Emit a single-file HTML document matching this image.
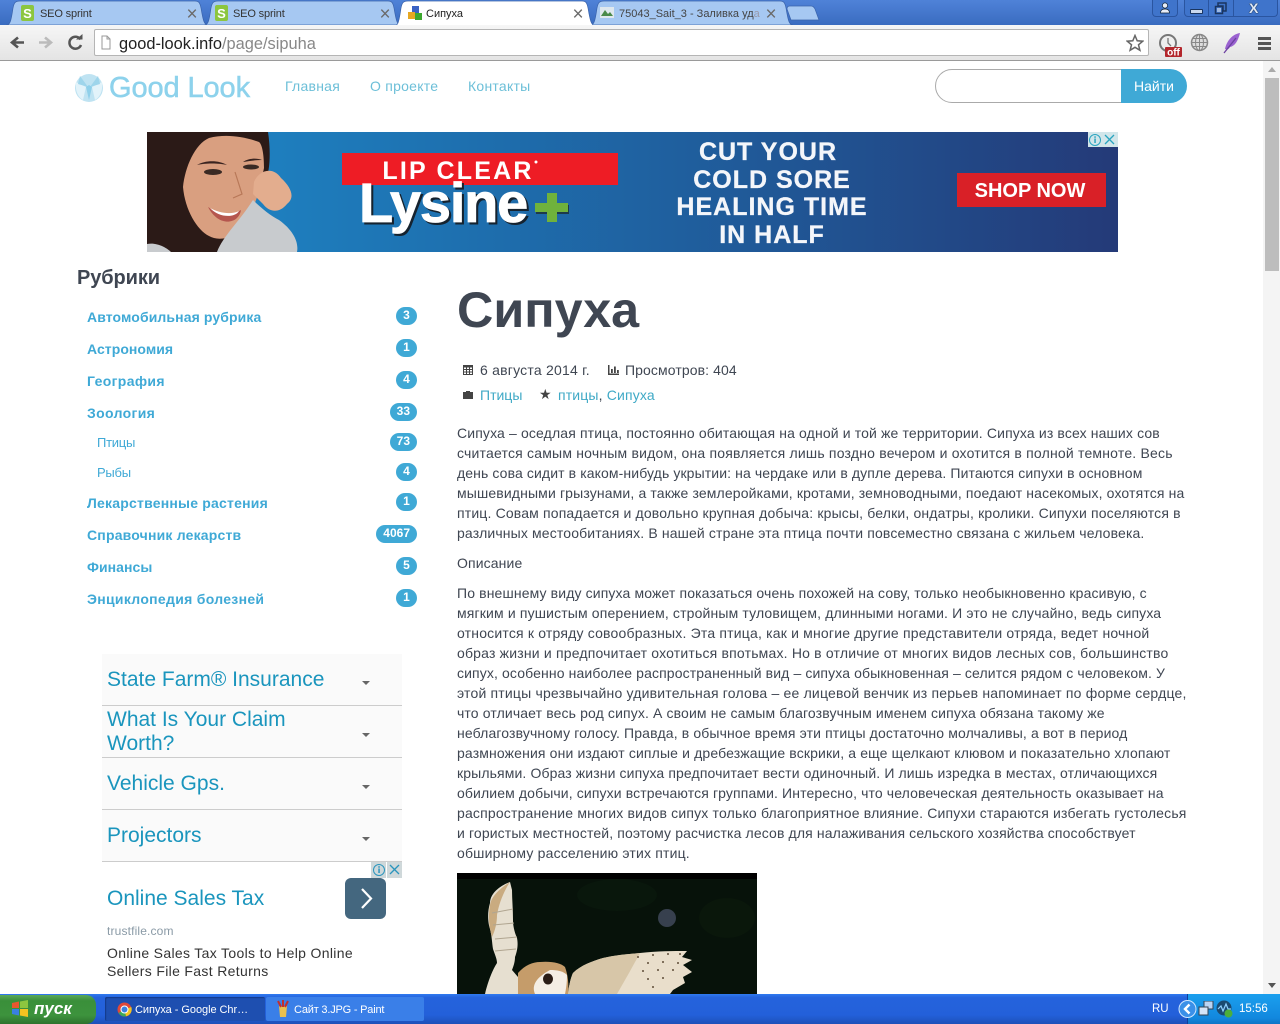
<!DOCTYPE html>
<html lang="ru"><head><meta charset="utf-8"><title>Сипуха</title>
<style>
*{box-sizing:border-box}
html,body{margin:0;padding:0;width:1280px;height:1024px;overflow:hidden;background:#fff}
body{font-family:"Liberation Sans","DejaVu Sans",sans-serif;position:relative;color:#3f4652}
.a{position:absolute;white-space:nowrap}
.tt{position:absolute;top:6px;font-size:11px;line-height:16px;color:#333;white-space:nowrap;letter-spacing:-.15px}
.x{position:absolute;top:8px;width:12px;height:14px;color:#6b6b6b;font-size:19px;line-height:14px;text-align:center}
.cat{position:absolute;left:87px;font-size:14px;font-weight:bold;color:#3fa9d6;white-space:nowrap;line-height:18px}
.sub{position:absolute;left:97px;font-size:13px;color:#3fa9d6;line-height:18px;letter-spacing:-.25px}
.bdg{position:absolute;right:863px;height:18px;min-width:21px;padding:0 7px;border-radius:9px;background:#3fa9d6;color:#fff;font-size:12px;font-weight:bold;line-height:17px;text-align:center}
.p{position:absolute;left:457px;font-size:14px;line-height:20px;color:#3f4652;white-space:nowrap}
.p span{display:block;height:20px}
.adl{position:absolute;left:102px;width:300px;background:#fafafa;border-bottom:1px solid #ccc}
.adl b{position:absolute;left:5px;font-weight:normal;font-size:21px;line-height:24px;color:#1a95bd;white-space:nowrap}
.adl i{position:absolute;left:260px;width:0;height:0;border-left:4px solid transparent;border-right:4px solid transparent;border-top:4px solid #666}
.lnk{color:#3fa9c6}
.nav{position:absolute;top:77px;font-size:14px;line-height:18px;color:#6cbfd8;letter-spacing:.25px;white-space:nowrap}
</style></head><body>

<!-- Chrome frame -->
<div class="a" style="left:0;top:0;width:1280px;height:25px;background:linear-gradient(#4f82d8,#3a6cc0)"></div>
<svg class="a" style="left:0;top:0" width="830" height="26" viewBox="0 0 830 26">
<path d="M6 25C10 25 11 22 13 8 14 3 15 1 20 1H195C199 1 200 3 201 8 203 20 204 25 208 25z" fill="#a6c8f2" stroke="#3a63ab" stroke-width=".7"/>
<path d="M204 25C208 25 209 22 211 8 212 3 213 1 218 1H388C392 1 393 3 394 8 396 20 397 25 401 25z" fill="#a6c8f2" stroke="#3a63ab" stroke-width=".7"/>
<path d="M590 25C594 25 595 22 597 8 598 3 599 1 604 1H780C784 1 785 3 786 8 788 20 789 25 793 25z" fill="#a6c8f2" stroke="#3a63ab" stroke-width=".7"/>
<path d="M394 26C398 26 399 22 401 8 402 3 403 1 408 1H582C586 1 587 3 588 8 590 20 591 26 596 26z" fill="#fff" stroke="#3a63ab" stroke-width=".7"/>
<path d="M787 9C787 7 788 6 790 6H811C813 6 814 7 815 9L819 20H791z" fill="#a6c8f2" stroke="#3a63ab" stroke-width=".7"/>
</svg>
<div class="tt" style="left:40px">SEO sprint</div><div class="x" style="left:186px">×</div>
<div class="tt" style="left:233px">SEO sprint</div><div class="x" style="left:379px">×</div>
<div class="tt" style="left:426px;color:#222;letter-spacing:0">Сипуха</div><div class="x" style="left:572px">×</div>
<div class="tt" style="left:619px;color:#444;letter-spacing:0">75043_Sait_3 - Заливка уд<span style="color:#99a">а</span></div><div class="x" style="left:765px">×</div>

<!-- favicons -->
<svg class="a" style="left:20px;top:4px" width="16" height="18" viewBox="0 0 16 18"><rect x="1" y="1" width="13" height="16" rx="2" fill="#8cc63f"/><text x="7.5" y="14" font-size="13" font-weight="bold" text-anchor="middle" fill="#fff" font-family="Liberation Sans">S</text></svg>
<svg class="a" style="left:214px;top:4px" width="16" height="18" viewBox="0 0 16 18"><rect x="1" y="1" width="13" height="16" rx="2" fill="#8cc63f"/><text x="7.5" y="14" font-size="13" font-weight="bold" text-anchor="middle" fill="#fff" font-family="Liberation Sans">S</text></svg>
<svg class="a" style="left:408px;top:5px" width="15" height="16" viewBox="0 0 15 16"><rect x="4" y="1" width="7" height="7" fill="#3a62c4"/><rect x="0" y="7" width="7" height="7" fill="#e6a823"/><rect x="7" y="8" width="7" height="7" fill="#3da82f"/></svg>
<svg class="a" style="left:600px;top:7px" width="14" height="11" viewBox="0 0 14 11"><rect width="14" height="11" fill="#dfe8ee"/><path d="M1 9 5 3l3 4 2-2 3 4z" fill="#4a8a4a"/></svg>

<!-- window controls -->
<div class="a" style="left:1152px;top:0;width:26px;height:17px;background:#3f74cb;border:1px solid #2a55a0;border-top:0;border-radius:0 0 4px 4px"></div>
<svg class="a" style="left:1159px;top:2px" width="12" height="12" viewBox="0 0 12 12"><circle cx="6" cy="3.5" r="2.6" fill="#e8eef8" stroke="#123" stroke-width=".7"/><path d="M1.5 11c0-3 2-4 4.500-4s4.500 1 4.500 4z" fill="#e8eef8" stroke="#123" stroke-width=".7"/></svg>
<div class="a" style="left:1184px;top:0;width:94px;height:17px;background:#3f74cb;border:1px solid #2a55a0;border-top:0;border-radius:0 0 4px 4px"></div>
<div class="a" style="left:1208px;top:0;width:1px;height:16px;background:#2a55a0"></div>
<div class="a" style="left:1233px;top:0;width:1px;height:16px;background:#2a55a0"></div>
<div class="a" style="left:1190px;top:9px;width:13px;height:5px;background:#c9d8ee;border:1px solid #1a3560;border-radius:1px"></div>
<svg class="a" style="left:1214px;top:2px" width="13" height="13" viewBox="0 0 13 13"><path d="M4 1h8v8H9V4H4z" fill="none" stroke="#1a3560" stroke-width="1.500"/><rect x="1.500" y="4.500" width="7" height="7" fill="none" stroke="#1a3560" stroke-width="1.500"/><rect x="3" y="6" width="4" height="4" fill="#9db9e4"/></svg>
<div class="a" style="left:1249px;top:1px;font-size:14px;line-height:15px;font-weight:bold;color:#dfe8f6;text-shadow:0 0 1px #123,0 0 1px #123">X</div>

<!-- toolbar -->
<div class="a" style="left:0;top:25px;width:1280px;height:36px;background:linear-gradient(#f6f6f6,#e4e4e4);border-bottom:1px solid #9a9a9a"></div>
<svg class="a" style="left:8px;top:34px" width="80" height="18" viewBox="0 0 80 18"><path d="M16 8.500H6M10 3.500 4 8.500l6 5" fill="none" stroke="#555" stroke-width="2.600"/><path d="M31 8.500h10M37 3.500l6 5-6 5" fill="none" stroke="#bbb" stroke-width="2.600"/><path d="M72.500 5.500A6 6 0 1 0 73 11" fill="none" stroke="#555" stroke-width="2.500"/><path d="M68 5.500h6.500V0z" fill="#555"/></svg>
<div class="a" style="left:94px;top:29px;width:1055px;height:27px;background:#fff;border:1px solid #b5b5b5;border-radius:2px"></div>
<svg class="a" style="left:100px;top:35px" width="12" height="15" viewBox="0 0 12 15"><path d="M2 1h5l3 3v10H2z" fill="#fff" stroke="#999"/><path d="M7 1v3h3" fill="none" stroke="#999"/></svg>
<div class="a" style="left:119px;top:34px;font-size:16.400px;line-height:20px;color:#222">good-look.info<span style="color:#888">/page/sipuha</span></div>
<svg class="a" style="left:1126px;top:34px" width="18" height="18" viewBox="0 0 18 18"><path d="M9 1.500 11.200 6.800l5.600.4-4.300 3.600 1.400 5.500L9 13.300 4.100 16.300l1.400-5.500L1.200 7.200l5.600-.4z" fill="#fff" stroke="#666" stroke-width="1.500"/></svg>
<svg class="a" style="left:1158px;top:32px" width="26" height="26" viewBox="0 0 26 26"><circle cx="10" cy="11" r="8" fill="#eee" stroke="#777" stroke-width="2"/><path d="M10 6v5l3 3" fill="none" stroke="#777" stroke-width="1.300"/><rect x="7" y="15" width="17" height="10" rx="1" fill="#b3262c"/><text x="15.500" y="23.500" font-size="10" font-weight="bold" text-anchor="middle" fill="#fff" font-family="Liberation Sans">off</text></svg>
<svg class="a" style="left:1190px;top:33px" width="19" height="19" viewBox="0 0 19 19"><circle cx="9.500" cy="9.500" r="8" fill="#ddd" stroke="#888" stroke-width="1.500"/><path d="M2 9.500h15M3 5.500h13M3 13.500h13M9.500 1.500v16" stroke="#888"/><ellipse cx="9.500" cy="9.500" rx="4" ry="8" fill="none" stroke="#888"/></svg>
<svg class="a" style="left:1223px;top:32px" width="18" height="22" viewBox="0 0 18 22"><path d="M17 1C10 2 4 8 2 17c2 1 4 0 5-2 5-1 8-6 10-14z" fill="#9a62d0"/><path d="M1 21 13 6" stroke="#6b3fa0" stroke-width="1.300"/></svg>
<div class="a" style="left:1258px;top:37px;width:13px;height:3px;background:#555;box-shadow:0 5px 0 #555,0 10px 0 #555"></div>

<!-- scrollbar -->
<div class="a" style="left:1263px;top:61px;width:17px;height:933px;background:#f4f4f4"></div>
<div class="a" style="left:1265px;top:78px;width:14px;height:193px;background:#bdbdbd"></div>
<div class="a" style="left:1268px;top:67px;width:0;height:0;border-left:4px solid transparent;border-right:4px solid transparent;border-bottom:5px solid #aaa"></div>
<div class="a" style="left:1268px;top:983px;width:0;height:0;border-left:4px solid transparent;border-right:4px solid transparent;border-top:5px solid #555"></div>

<!-- header -->
<svg class="a" style="left:74px;top:73px" width="30" height="30" viewBox="0 0 30 30"><circle cx="15" cy="15" r="14" fill="#bfe3f2"/><path d="M2 9l10 5-3 13C4 24 1 18 2 9zM28 9 18 14l3 13c5-3 8-9 7-18z" fill="#e2f3fa"/><path d="M6 3l8 11-10-3zM24 3l-8 11 10-3z" fill="#9ed5eb"/><path d="M12 14l3-2 3 2-3 13z" fill="#8fd0ea"/></svg>
<div class="a" style="left:109px;top:70px;font-size:29px;line-height:36px;color:#8dd2ec;-webkit-text-stroke:.5px #8dd2ec;letter-spacing:-.1px">Good Look</div>
<div class="nav" style="left:285px">Главная</div>
<div class="nav" style="left:370px">О проекте</div>
<div class="nav" style="left:468px">Контакты</div>
<div class="a" style="left:935px;top:69px;width:190px;height:34px;background:#fff;border:1px solid #aaa;border-radius:17px 0 0 17px"></div>
<div class="a" style="left:1121px;top:69px;width:66px;height:34px;background:#3fa9d6;border-radius:0 17px 17px 0;color:#fff;font-size:14px;line-height:35px;padding-left:13px">Найти</div>

<!-- banner -->
<svg class="a" style="left:147px;top:132px" width="971" height="120" viewBox="0 0 971 120">
<defs><linearGradient id="g" x1="0" x2="1" y1="0" y2="0"><stop offset="0" stop-color="#1d88c8"/><stop offset=".55" stop-color="#1f5f9e"/><stop offset="1" stop-color="#243a78"/></linearGradient></defs>
<rect width="971" height="120" fill="url(#g)"/>
<path d="M0 0H121C124 20 123 40 118 50L70 120H0z" fill="#2b1a17"/>
<path d="M62 6C48 12 38 35 36 55 38 78 50 98 62 104 72 110 90 106 100 92L112 60 117 36C117 22 115 12 112 10 95 4 78 2 62 6z" fill="#d99f80"/>
<path d="M70 120C76 104 92 90 106 68 114 76 124 84 132 88 146 98 152 110 150 120z" fill="#c8cbce"/>
<path d="M0 112C10 110 20 116 24 120H0z" fill="#c8cbce"/>
<path d="M107 50C112 38 126 34 134 46 145 56 148 66 140 72 132 82 122 80 116 72L106 62z" fill="#e3ad8e"/>
<path d="M61 75C72 82 84 84 94 78 92 92 72 96 61 75z" fill="#b5564e"/>
<path d="M63 76C72 81 84 83 92 79 88 86 72 86 63 76z" fill="#fff"/>
<path d="M50 33C58 28 72 28 80 33 72 31 58 31 50 33zM96 30C102 26 110 26 115 28 108 28 102 29 96 30z" fill="#3a2420"/>
<ellipse cx="66" cy="40" rx="9" ry="3" fill="#3a2a24"/><ellipse cx="104" cy="35" rx="8" ry="2.500" fill="#3a2a24"/>
<path d="M88 40 95 62 86 66" fill="none" stroke="#b87858" stroke-width="1.200"/>
<rect x="195" y="21" width="276" height="32" fill="#ee1c25"/>
<text x="311" y="47" font-size="25" font-weight="bold" fill="#fff" text-anchor="middle" letter-spacing="2.200" font-family="Liberation Sans">LIP CLEAR</text>
<circle cx="389" cy="30" r="1.500" fill="#fff"/>
<text x="214" y="92" font-size="56" font-weight="bold" fill="#16232f" letter-spacing="-1.200" stroke="#16232f" stroke-width="1" font-family="Liberation Sans">Lysine</text>
<text x="212" y="90" font-size="56" font-weight="bold" fill="#fff" letter-spacing="-1.200" stroke="#fff" stroke-width=".8" font-family="Liberation Sans">Lysine</text>
<rect x="389" y="73" width="33" height="9" fill="#1d3a4a"/><rect x="388" y="71" width="33" height="9" fill="#6fb23c"/><rect x="400" y="61" width="10" height="29" fill="#6fb23c"/>
<g font-family="Liberation Sans" font-weight="bold" fill="#f4f6fa" stroke="#f4f6fa" stroke-width=".3" font-size="25" text-anchor="middle" letter-spacing="1">
<text x="621" y="28">CUT YOUR</text><text x="625" y="56">COLD SORE</text><text x="625" y="83">HEALING TIME</text><text x="625" y="111">IN HALF</text></g>
<rect x="810" y="41" width="149" height="34" fill="#d92027"/>
<text x="883" y="65" font-size="20" font-weight="bold" fill="#fff" text-anchor="middle" font-family="Liberation Sans">SHOP NOW</text>
<rect x="941" y="0" width="30" height="15" fill="#d2e6ea"/>
<circle cx="948" cy="8" r="5.500" fill="none" stroke="#2aa5c0"/><rect x="947.300" y="6.500" width="1.500" height="4.500" fill="#2aa5c0"/><rect x="947.300" y="4.300" width="1.500" height="1.500" fill="#2aa5c0"/>
<path d="M958 3l9 9M967 3l-9 9" stroke="#2aa5c0" stroke-width="1.300"/>
</svg>

<!-- sidebar -->
<div class="a" style="left:77px;top:266px;font-size:20px;line-height:24px;font-weight:bold;color:#3f4652;letter-spacing:-.1px">Рубрики</div>
<div class="cat" style="top:308px;letter-spacing:.11px">Автомобильная рубрика</div><div class="bdg" style="top:307px">3</div>
<div class="cat" style="top:340px;letter-spacing:.05px">Астрономия</div><div class="bdg" style="top:339px">1</div>
<div class="cat" style="top:372px;letter-spacing:.35px">География</div><div class="bdg" style="top:371px">4</div>
<div class="cat" style="top:404px;letter-spacing:.35px">Зоология</div><div class="bdg" style="top:403px">33</div>
<div class="sub" style="top:434px">Птицы</div><div class="bdg" style="top:433px">73</div>
<div class="sub" style="top:464px">Рыбы</div><div class="bdg" style="top:463px">4</div>
<div class="cat" style="top:494px;letter-spacing:.21px">Лекарственные растения</div><div class="bdg" style="top:493px">1</div>
<div class="cat" style="top:526px;letter-spacing:.19px">Справочник лекарств</div><div class="bdg" style="top:525px">4067</div>
<div class="cat" style="top:558px;letter-spacing:.05px">Финансы</div><div class="bdg" style="top:557px">5</div>
<div class="cat" style="top:590px;letter-spacing:.3px">Энциклопедия болезней</div><div class="bdg" style="top:589px">1</div>

<!-- sidebar ads -->
<div class="adl" style="top:654px;height:52px"><b style="top:14px">State Farm® Insurance</b><i style="top:27px"></i></div>
<div class="adl" style="top:706px;height:52px"><b style="top:2px">What Is Your Claim<br>Worth?</b><i style="top:27px"></i></div>
<div class="adl" style="top:758px;height:52px"><b style="top:14px">Vehicle Gps.</b><i style="top:27px"></i></div>
<div class="adl" style="top:810px;height:52px"><b style="top:14px">Projectors</b><i style="top:27px"></i></div>
<div class="a" style="left:371px;top:862px;width:31px;height:16px;background:#cfd8da"></div>
<svg class="a" style="left:371px;top:862px" width="31" height="16" viewBox="0 0 31 16"><circle cx="8" cy="8" r="5.500" fill="none" stroke="#2a95bd"/><rect x="7.300" y="6.500" width="1.500" height="4.500" fill="#2a95bd"/><rect x="7.300" y="4.200" width="1.500" height="1.500" fill="#2a95bd"/><rect x="15" y="0" width="1" height="16" fill="#fff"/><path d="M19 3l9 9M28 3l-9 9" stroke="#2a95bd" stroke-width="1.300"/></svg>
<div class="a" style="left:107px;top:886px;font-size:21px;line-height:26px;color:#1a95bd">Online Sales Tax</div>
<div class="a" style="left:345px;top:878px;width:41px;height:41px;border-radius:6px;background:#44677f"></div>
<svg class="a" style="left:345px;top:878px" width="41" height="41" viewBox="0 0 41 41"><path d="M17 11l9 9.500-9 9.500" fill="none" stroke="#fff" stroke-width="2.200"/></svg>
<div class="a" style="left:107px;top:923px;font-size:12px;line-height:16px;color:#8a9aa6;letter-spacing:.15px">trustfile.com</div>
<div class="a" style="left:107px;top:944px;font-size:14px;line-height:18px;color:#333;letter-spacing:.33px">Online Sales Tax Tools to Help Online<br>Sellers File Fast Returns</div>

<!-- article -->
<div class="a" style="left:457px;top:281px;font-size:50.300px;line-height:58px;font-weight:bold;color:#3f4652">Сипуха</div>
<svg class="a" style="left:463px;top:365px" width="10" height="10" viewBox="0 0 10 10"><path d="M0 0h10v10H0z" fill="#444"/><path d="M1 2.500h2v1.500H1zM4 2.500h2v1.500H4zM7 2.500h2v1.500H7zM1 5h2v1.500H1zM4 5h2v1.500H4zM7 5h2v1.500H7zM1 7.500h2V9H1zM4 7.500h2V9H4zM7 7.500h2V9H7z" fill="#fff"/></svg>
<div class="a" style="left:480px;top:361px;font-size:14px;line-height:18px;letter-spacing:.22px">6 августа 2014 г.</div>
<svg class="a" style="left:608px;top:365px" width="11" height="10" viewBox="0 0 11 10"><path d="M0 0h1.500v8.500H11V10H0zM3 4h1.800v4H3zM6 1.500h1.800V8H6zM9 5h1.800v3H9z" fill="#444"/></svg>
<div class="a" style="left:625px;top:361px;font-size:14px;line-height:18px;letter-spacing:.1px">Просмотров: 404</div>
<svg class="a" style="left:463px;top:391px" width="10" height="8" viewBox="0 0 10 8"><path d="M3 1V0h4v1h3v7H0V1z" fill="#444"/></svg>
<div class="a lnk" style="left:480px;top:386px;font-size:14px;line-height:18px">Птицы</div>
<div class="a" style="left:539px;top:386px;font-size:14px;line-height:17px;color:#444">★</div>
<div class="a" style="left:558px;top:386px;font-size:14px;line-height:18px;letter-spacing:.15px"><span class="lnk">птицы</span>, <span class="lnk">Сипуха</span></div>

<div class="p" style="top:423px">
<span style="letter-spacing:.14px">Сипуха – оседлая птица, постоянно обитающая на одной и той же территории. Сипуха из всех наших сов</span>
<span style="letter-spacing:.2px">считается самым ночным видом, она появляется лишь поздно вечером и охотится в полной темноте. Весь</span>
<span style="letter-spacing:.11px">день сова сидит в каком-нибудь укрытии: на чердаке или в дупле дерева. Питаются сипухи в основном</span>
<span style="letter-spacing:.14px">мышевидными грызунами, а также землеройками, кротами, земноводными, поедают насекомых, охотятся на</span>
<span style="letter-spacing:.16px">птиц. Совам попадается и довольно крупная добыча: крысы, белки, ондатры, кролики. Сипухи поселяются в</span>
<span style="letter-spacing:.14px">различных местообитаниях. В нашей стране эта птица почти повсеместно связана с жильем человека.</span>
</div>
<div class="p" style="top:553px;letter-spacing:.12px">Описание</div>
<div class="p" style="top:583px">
<span style="letter-spacing:.13px">По внешнему виду сипуха может показаться очень похожей на сову, только необыкновенно красивую, с</span>
<span style="letter-spacing:.15px">мягким и пушистым оперением, стройным туловищем, длинными ногами. И это не случайно, ведь сипуха</span>
<span style="letter-spacing:.19px">относится к отряду совообразных. Эта птица, как и многие другие представители отряда, ведет ночной</span>
<span style="letter-spacing:.19px">образ жизни и предпочитает охотиться впотьмах. Но в отличие от многих видов лесных сов, большинство</span>
<span style="letter-spacing:.12px">сипух, особенно наиболее распространенный вид – сипуха обыкновенная – селится рядом с человеком. У</span>
<span style="letter-spacing:.19px">этой птицы чрезвычайно удивительная голова – ее лицевой венчик из перьев напоминает по форме сердце,</span>
<span style="letter-spacing:.13px">что отличает весь род сипух. А своим не самым благозвучным именем сипуха обязана такому же</span>
<span style="letter-spacing:.13px">неблагозвучному голосу. Правда, в обычное время эти птицы достаточно молчаливы, а вот в период</span>
<span style="letter-spacing:.14px">размножения они издают сиплые и дребезжащие вскрики, а еще щелкают клювом и показательно хлопают</span>
<span style="letter-spacing:.12px">крыльями. Образ жизни сипуха предпочитает вести одиночный. И лишь изредка в местах, отличающихся</span>
<span style="letter-spacing:.12px">обилием добычи, сипухи встречаются группами. Интересно, что человеческая деятельность оказывает на</span>
<span style="letter-spacing:.18px">распространение многих видов сипух только благоприятное влияние. Сипухи стараются избегать густолесья</span>
<span style="letter-spacing:.13px">и гористых местностей, поэтому расчистка лесов для налаживания сельского хозяйства способствует</span>
<span style="letter-spacing:.18px">обширному расселению этих птиц.</span>
</div>

<!-- owl -->
<svg class="a" style="left:457px;top:873px" width="300" height="121" viewBox="0 0 300 121">
<rect width="300" height="121" fill="#07120a"/><rect width="300" height="6" fill="#000"/>
<ellipse cx="160" cy="22" rx="40" ry="16" fill="#09170c"/>
<ellipse cx="270" cy="45" rx="28" ry="20" fill="#0a170b"/>
<circle cx="210" cy="45" r="9" fill="#37404e"/>
<path d="M53 9C40 14 33 22 33 30 30 40 31 50 33 56 35 64 35 70 36 76 38 82 40 86 40 90 36 96 31 108 28 121H72L61 104 55 97C57 92 58 88 58 84 61 76 61 70 60 65 57 58 56 52 56 47 56 36 55 26 55 17z" fill="#e6dfd0"/>
<path d="M53 9C42 16 34 24 33 32 31 44 32 54 35 64 38 58 40 50 40 42 42 30 47 18 53 9z" fill="#c9ab80"/>
<path d="M35 40 56 36M36 52 57 50M38 66 60 64M38 78 59 76" stroke="#b0a590" stroke-width="1"/>
<path d="M61 121 61 100C68 92 76 89 83 89 94 88 104 90 108 94 111 102 112 112 111 121z" fill="#c59c6a"/>
<path d="M78 121C74 112 80 104 93 97 100 97 106 98 110 102 110 110 109 116 108 121z" fill="#f4eee4"/>
<ellipse cx="91" cy="106" rx="5" ry="5.500" fill="#2a1d16"/>
<path d="M111 121C112 112 114 104 116 100 124 92 136 88 146 85 160 82 172 81 183 80 200 78 216 78 230 78L225 84 235 87 226 92 235 99 226 104 228 110 216 117 213 121z" fill="#e9decb"/>
<path d="M116 100C124 92 136 88 146 85 158 82 172 81 183 80L172 100 160 121H111C112 112 114 104 116 100z" fill="#d7c6a8"/>
<path d="M180 84h2M195 82h2M210 81h2M222 81h2M190 90h2M205 89h2M220 90h2M185 98h2M200 97h2M215 97h2M190 106h2M205 105h2M195 114h2" stroke="#5e4c38" stroke-width="1.600"/>
</svg>

<!-- taskbar -->
<div class="a" style="left:0;top:994px;width:1280px;height:30px;background:linear-gradient(#2f7af0 0,#2563dc 12%,#2360da 70%,#1d50b8 100%)"></div>
<div class="a" style="left:1187px;top:994px;width:93px;height:30px;background:linear-gradient(#1ba0ee,#1288de 80%,#0f74c6);border-left:1px solid #0f3f9a"></div>
<div class="a" style="left:0;top:995px;width:96px;height:29px;background:linear-gradient(#5aa85a,#3a8f3a 20%,#3d933d 70%,#2d722d);border-radius:0 10px 10px 0"></div>
<svg class="a" style="left:11px;top:1000px" width="18" height="18" viewBox="0 0 18 18"><path d="M1 3l7-1.500V8H1z" fill="#e8572e"/><path d="M9 1.500 17 0v8H9z" fill="#8cc63f"/><path d="M1 9h7v6.500L1 14z" fill="#3a80e0"/><path d="M9 9h8v8l-8-1.500z" fill="#f4c320"/></svg>
<div class="a" style="left:34px;top:1000px;font-size:17px;line-height:18px;font-weight:bold;font-style:italic;color:#fff">пуск</div>
<div class="a" style="left:105px;top:997px;width:160px;height:24px;background:#1e4fb0;border-radius:2px;box-shadow:inset 1px 1px 1px #143a8a"></div>
<div class="a" style="left:266px;top:997px;width:158px;height:24px;background:#3a7fe8;border-radius:2px"></div>
<svg class="a" style="left:117px;top:1002px" width="15" height="15" viewBox="0 0 15 15"><circle cx="7.500" cy="7.500" r="7" fill="#e0483a"/><path d="M7.500 7.500 1.500 11A7 7 0 0 0 9 14.300z" fill="#3da85a"/><path d="M7.500 7.500 9 14.300A7 7 0 0 0 14.300 5z" fill="#f4c320"/><circle cx="7.500" cy="7.500" r="3.500" fill="#3a80e0" stroke="#fff"/></svg>
<div class="a" style="left:135px;top:1003px;font-size:11px;line-height:15px;color:#fff;letter-spacing:-.05px">Сипуха - Google Chr…</div>
<svg class="a" style="left:276px;top:1000px" width="14" height="18" viewBox="0 0 14 18"><path d="M3 6h8l-1 11H4z" fill="#e8c050"/><path d="M2 1l3 6M7 0v7M12 1 9 7" stroke="#c03030" stroke-width="2"/></svg>
<div class="a" style="left:294px;top:1003px;font-size:11px;line-height:15px;color:#fff;letter-spacing:-.2px">Сайт 3.JPG - Paint</div>
<div class="a" style="left:1152px;top:1002px;font-size:11.500px;line-height:15px;color:#fff">RU</div>
<svg class="a" style="left:1178px;top:1000px" width="19" height="18" viewBox="0 0 19 18"><circle cx="9.500" cy="9" r="8.500" fill="#3a90e8" stroke="#cfe6ff"/><path d="M11.500 4.500 7 9l4.500 4.500" fill="none" stroke="#fff" stroke-width="2.400"/></svg>
<svg class="a" style="left:1198px;top:1001px" width="16" height="16" viewBox="0 0 16 16"><rect x="6" y="0" width="9" height="8" fill="#b9d4f4" stroke="#345"/><rect x="1" y="6" width="9" height="8" fill="#d4e4f8" stroke="#345"/></svg>
<svg class="a" style="left:1216px;top:1000px" width="17" height="18" viewBox="0 0 17 18"><circle cx="8" cy="8" r="7.500" fill="#1a4a70"/><path d="M2 9l3-3 2 5 3-7 2 5h3" fill="none" stroke="#8fd0ff" stroke-width="1.200"/><circle cx="12.500" cy="13.500" r="4" fill="#4caf3a"/></svg>
<div class="a" style="left:1239px;top:1002px;font-size:11.500px;line-height:15px;color:#fff">15:56</div>
</body></html>
